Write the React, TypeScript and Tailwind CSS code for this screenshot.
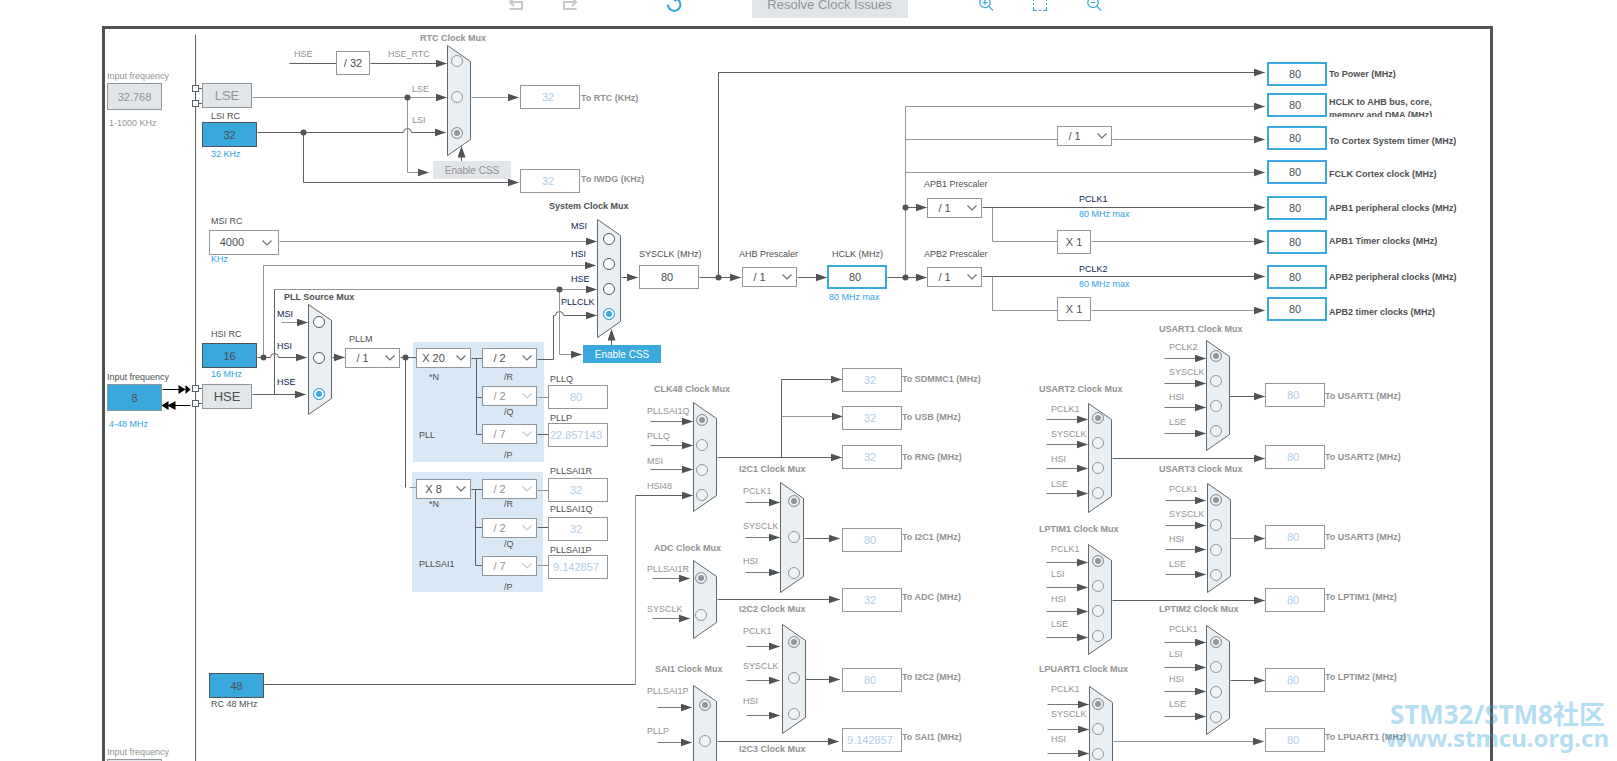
import { useState } from "react";
import clsx from "clsx";

type Tone = "dark" | "gray" | "navy" | "blue";

const tones: Record<Tone, string> = {
  dark: "text-[#4d5052]",
  gray: "text-[#929292]",
  navy: "text-[#0b1d4d]",
  blue: "text-[#2ea3dc]",
};

// --- WIRES ---
type Wire = { d: string; soft?: boolean; arrow?: boolean };

const wires: Wire[] = [
  { d: "M195 34V1000" },
  // RTC
  { d: "M289 63H336" },
  { d: "M370 63H446", arrow: true },
  { d: "M252 97H446", soft: true, arrow: true },
  { d: "M257 132H403a4 4 0 0 1 8 0H445", arrow: true },
  { d: "M407 97V172H428", soft: true, arrow: true },
  { d: "M303 132V182H518", arrow: true },
  { d: "M471 97H518", soft: true, arrow: true },
  { d: "M461 161V146", arrow: true },
  // System clock
  { d: "M279 241H596", soft: true, arrow: true },
  { d: "M263 357V265H595", soft: true, arrow: true },
  { d: "M274 394V289" },
  { d: "M274 289H596", soft: true, arrow: true },
  { d: "M537 359H553V315H555a4 4 0 0 1 8 0H596", arrow: true },
  { d: "M559 289V354H581", soft: true, arrow: true },
  { d: "M611 345V329", arrow: true },
  { d: "M621 277H637", arrow: true },
  { d: "M699 277H740", arrow: true },
  { d: "M718 277V72H1264", arrow: true },
  { d: "M797 277H826", arrow: true },
  { d: "M887 277H926", arrow: true },
  { d: "M905 277V106H1264", soft: true, arrow: true },
  { d: "M905 139H1057", soft: true },
  { d: "M1112 139H1264", soft: true, arrow: true },
  { d: "M905 172H1264", soft: true, arrow: true },
  { d: "M905 207H926", arrow: true },
  { d: "M982 207H1264", arrow: true },
  { d: "M992 207V241H1057", soft: true },
  { d: "M1091 241H1264", soft: true, arrow: true },
  { d: "M982 276H1264", arrow: true },
  { d: "M992 276V310H1057", soft: true },
  { d: "M1091 310H1264", soft: true, arrow: true },
  // PLL
  { d: "M281 322H307", soft: true, arrow: true },
  { d: "M257 357H270a4 4 0 0 1 8 0H306", arrow: true },
  { d: "M252 394H305", arrow: true },
  { d: "M332 357H344", arrow: true },
  { d: "M400 357H416" },
  { d: "M405 357V487" },
  { d: "M409 487H416", soft: true },
  { d: "M471 358H482" },
  { d: "M476 358V434H482" },
  { d: "M476 397H482" },
  { d: "M537 397H548", soft: true },
  { d: "M537 434H548" },
  { d: "M471 489H482" },
  { d: "M475 489V565H482" },
  { d: "M475 527H482" },
  { d: "M537 490H548", soft: true },
  { d: "M537 527H548" },
  { d: "M537 565H548", soft: true },
  { d: "M264 684H635" },
  { d: "M635 684V495", soft: true },
  { d: "M635 495H692", arrow: true },
  // Peripheral outputs
  { d: "M717 457H841", arrow: true },
  { d: "M781 457V379" },
  { d: "M781 379H841", arrow: true },
  { d: "M781 416H842", soft: true, arrow: true },
  { d: "M804 538H839", arrow: true },
  { d: "M717 599H839", arrow: true },
  { d: "M805 679H839", arrow: true },
  { d: "M717 741H838", arrow: true },
  { d: "M1229 396H1264", arrow: true },
  { d: "M1112 458H1264", arrow: true },
  { d: "M1230 538H1264", soft: true, arrow: true },
  { d: "M1112 600H1264", arrow: true },
  { d: "M1230 680H1264", arrow: true },
  { d: "M1113 741H1263", soft: true, arrow: true },
  // Pins
  { d: "M198 88H202M198 103H202M198 388H202M198 403H202" },
];

const dots = [
  [407, 97], [303, 132], [559, 289], [718, 277], [905, 207],
  [905, 277], [263, 357], [405, 357],
];

// --- MUXES ---
type MuxInput = { label: string; y: number; radioY: number; wireY?: number };
type MuxData = {
  name: string;
  titleX: number;
  titleY: number;
  x: number;
  y: number;
  height: number;
  radioX: number;
  labelX: number;
  wireX?: number;
  tipX?: number;
  active?: boolean;
  selected: number;
  inputs: MuxInput[];
};

const muxes: MuxData[] = [
  {
    name: "RTC Clock Mux", titleX: 420, titleY: 38, x: 447, y: 45, height: 110, radioX: 457, labelX: 412, selected: 2,
    inputs: [
      { label: "", y: 54, radioY: 61 },
      { label: "LSE", y: 89, radioY: 97 },
      { label: "LSI", y: 120, radioY: 133 },
    ],
  },
  {
    name: "System Clock Mux", titleX: 549, titleY: 206, x: 597, y: 219, height: 118, radioX: 609, labelX: 571, active: true, selected: 3,
    inputs: [
      { label: "MSI", y: 226, radioY: 239 },
      { label: "HSI", y: 254, radioY: 264 },
      { label: "HSE", y: 279, radioY: 289 },
      { label: "PLLCLK", y: 302, radioY: 314 },
    ],
  },
  {
    name: "PLL Source Mux", titleX: 284, titleY: 297, x: 308, y: 304, height: 110, radioX: 319, labelX: 277, active: true, selected: 2,
    inputs: [
      { label: "MSI", y: 314, radioY: 322 },
      { label: "HSI", y: 346, radioY: 358 },
      { label: "HSE", y: 382, radioY: 394 },
    ],
  },
  {
    name: "CLK48 Clock Mux", titleX: 654, titleY: 389, x: 693, y: 402, height: 109, radioX: 702, labelX: 647, wireX: 650, tipX: 692, selected: 0,
    inputs: [
      { label: "PLLSAI1Q", y: 411, radioY: 420, wireY: 421 },
      { label: "PLLQ", y: 436, radioY: 445, wireY: 445 },
      { label: "MSI", y: 461, radioY: 470, wireY: 469 },
      { label: "HSI48", y: 486, radioY: 495 },
    ],
  },
  {
    name: "I2C1 Clock Mux", titleX: 739, titleY: 469, x: 780, y: 482, height: 110, radioX: 794, labelX: 743, wireX: 745, tipX: 779, selected: 0,
    inputs: [
      { label: "PCLK1", y: 491, radioY: 501, wireY: 502 },
      { label: "SYSCLK", y: 526, radioY: 537, wireY: 537 },
      { label: "HSI", y: 561, radioY: 573, wireY: 572 },
    ],
  },
  {
    name: "ADC Clock Mux", titleX: 654, titleY: 548, x: 693, y: 560, height: 78, radioX: 701, labelX: 647, wireX: 652, tipX: 689, selected: 0,
    inputs: [
      { label: "PLLSAI1R", y: 569, radioY: 578, wireY: 578 },
      { label: "SYSCLK", y: 609, radioY: 615, wireY: 618 },
    ],
  },
  {
    name: "I2C2 Clock Mux", titleX: 739, titleY: 609, x: 782, y: 624, height: 109, radioX: 794, labelX: 743, wireX: 746, tipX: 779, selected: 0,
    inputs: [
      { label: "PCLK1", y: 631, radioY: 642, wireY: 646 },
      { label: "SYSCLK", y: 666, radioY: 678, wireY: 680 },
      { label: "HSI", y: 701, radioY: 714, wireY: 715 },
    ],
  },
  {
    name: "SAI1 Clock Mux", titleX: 655, titleY: 669, x: 693, y: 685, height: 110, radioX: 705, labelX: 647, wireX: 657, tipX: 691, selected: 0,
    inputs: [
      { label: "PLLSAI1P", y: 691, radioY: 705, wireY: 707 },
      { label: "PLLP", y: 731, radioY: 741, wireY: 742 },
    ],
  },
  {
    name: "USART1 Clock Mux", titleX: 1159, titleY: 329, x: 1206, y: 340, height: 110, radioX: 1216, labelX: 1169, wireX: 1164, tipX: 1205, selected: 0,
    inputs: [
      { label: "PCLK2", y: 347, radioY: 356, wireY: 358 },
      { label: "SYSCLK", y: 372, radioY: 381, wireY: 383 },
      { label: "HSI", y: 397, radioY: 406, wireY: 407 },
      { label: "LSE", y: 422, radioY: 431, wireY: 433 },
    ],
  },
  {
    name: "USART2 Clock Mux", titleX: 1039, titleY: 389, x: 1088, y: 403, height: 109, radioX: 1098, labelX: 1051, wireX: 1046, tipX: 1087, selected: 0,
    inputs: [
      { label: "PCLK1", y: 409, radioY: 418, wireY: 419 },
      { label: "SYSCLK", y: 434, radioY: 443, wireY: 444 },
      { label: "HSI", y: 459, radioY: 468, wireY: 468 },
      { label: "LSE", y: 484, radioY: 493, wireY: 493 },
    ],
  },
  {
    name: "USART3 Clock Mux", titleX: 1159, titleY: 469, x: 1207, y: 483, height: 109, radioX: 1216, labelX: 1169, wireX: 1165, tipX: 1205, selected: 0,
    inputs: [
      { label: "PCLK1", y: 489, radioY: 500, wireY: 500 },
      { label: "SYSCLK", y: 514, radioY: 525, wireY: 525 },
      { label: "HSI", y: 539, radioY: 550, wireY: 549 },
      { label: "LSE", y: 564, radioY: 575, wireY: 574 },
    ],
  },
  {
    name: "LPTIM1 Clock Mux", titleX: 1039, titleY: 529, x: 1088, y: 544, height: 110, radioX: 1098, labelX: 1051, wireX: 1046, tipX: 1087, selected: 0,
    inputs: [
      { label: "PCLK1", y: 549, radioY: 561, wireY: 562 },
      { label: "LSI", y: 574, radioY: 586, wireY: 587 },
      { label: "HSI", y: 599, radioY: 611, wireY: 611 },
      { label: "LSE", y: 624, radioY: 636, wireY: 637 },
    ],
  },
  {
    name: "LPTIM2 Clock Mux", titleX: 1159, titleY: 609, x: 1206, y: 625, height: 109, radioX: 1216, labelX: 1169, wireX: 1164, tipX: 1205, selected: 0,
    inputs: [
      { label: "PCLK1", y: 629, radioY: 642, wireY: 642 },
      { label: "LSI", y: 654, radioY: 667, wireY: 667 },
      { label: "HSI", y: 679, radioY: 692, wireY: 691 },
      { label: "LSE", y: 704, radioY: 717, wireY: 716 },
    ],
  },
  {
    name: "LPUART1 Clock Mux", titleX: 1039, titleY: 669, x: 1089, y: 686, height: 110, radioX: 1098, labelX: 1051, wireX: 1047, tipX: 1088, selected: 0,
    inputs: [
      { label: "PCLK1", y: 689, radioY: 704, wireY: 704 },
      { label: "SYSCLK", y: 714, radioY: 729, wireY: 729 },
      { label: "HSI", y: 739, radioY: 754, wireY: 753 },
      { label: "LSE", y: 764, radioY: 779, wireY: 778 },
    ],
  },
];

// --- VALUE BOXES ---
const fieldKinds = {
  input: "w-[55px] h-[27px] border border-[#8f979d]",
  source: "w-[55px] h-[25px] border border-[#4f5456] bg-[#39a8dc] text-[#4d5052]",
  factor: "w-[34px] h-6 border border-[#8f979d] bg-white text-[#4d5052]",
  plain: "w-[60px] h-6 border border-[#8f979d] bg-white pr-1 text-[#4d5052]",
  off: "w-[60px] h-6 border border-[#8f979d] bg-white pr-1 text-[#b3cde6]",
  on: "w-[60px] h-6 border-2 border-[#39a8dc] bg-white pr-1 text-[#4d5052]",
};

type FieldData = {
  id: string;
  kind: keyof typeof fieldKinds;
  x: number;
  y: number;
  value: string;
  className?: string;
  label?: string;
  labelX?: number;
  labelY?: number;
  tone?: Tone;
  bold?: boolean;
};

const fields: FieldData[] = [
  { id: "lse-in", kind: "input", x: 107, y: 83, value: "32.768", className: "bg-[#e2e6e9] text-[#8f959a]", label: "Input frequency", labelX: 107, labelY: 76, tone: "gray" },
  { id: "hse-in", kind: "input", x: 107, y: 384, value: "8", className: "bg-[#39a8dc] text-[#4d5052]", label: "Input frequency", labelX: 107, labelY: 377, tone: "dark" },
  { id: "sai-in", kind: "input", x: 107, y: 759, value: "2.097152", className: "bg-[#e2e6e9] text-[#8f959a]", label: "Input frequency", labelX: 107, labelY: 752, tone: "gray" },
  { id: "lsi", kind: "source", x: 202, y: 122, value: "32", label: "LSI RC", labelX: 211, labelY: 116, tone: "dark" },
  { id: "hsi", kind: "source", x: 202, y: 343, value: "16", label: "HSI RC", labelX: 211, labelY: 334, tone: "dark" },
  { id: "hsi48", kind: "source", x: 209, y: 673, value: "48", label: "RC 48 MHz", labelX: 211, labelY: 704, tone: "dark" },
  { id: "rtc-div", kind: "factor", x: 336, y: 51, value: "/ 32" },
  { id: "apb1-mul", kind: "factor", x: 1057, y: 230, value: "X 1" },
  { id: "apb2-mul", kind: "factor", x: 1057, y: 297, value: "X 1" },
  { id: "sysclk", kind: "plain", x: 639, y: 265, value: "80", label: "SYSCLK (MHz)", labelX: 639, labelY: 254, tone: "dark" },
  { id: "hclk", kind: "on", x: 827, y: 265, value: "80", label: "HCLK (MHz)", labelX: 832, labelY: 254, tone: "dark" },
  { id: "pllq", kind: "off", x: 548, y: 385, value: "80", label: "PLLQ", labelX: 550, labelY: 379, tone: "dark" },
  { id: "pllp", kind: "off", x: 548, y: 423, value: "22.857143", label: "PLLP", labelX: 550, labelY: 418, tone: "dark" },
  { id: "pllsai1r", kind: "off", x: 548, y: 478, value: "32", label: "PLLSAI1R", labelX: 550, labelY: 471, tone: "dark" },
  { id: "pllsai1q", kind: "off", x: 548, y: 517, value: "32", label: "PLLSAI1Q", labelX: 550, labelY: 509, tone: "dark" },
  { id: "pllsai1p", kind: "off", x: 548, y: 555, value: "9.142857", label: "PLLSAI1P", labelX: 550, labelY: 550, tone: "dark" },
];

const output = (id: string, x: number, y: number, value: string, label: string, labelX: number, labelY: number): FieldData => ({
  id, kind: "off", x, y, value, label, labelX, labelY, tone: "gray", bold: true,
});

const outputs: FieldData[] = [
  output("rtc", 520, 85, "32", "To RTC (KHz)", 581, 98),
  output("iwdg", 520, 169, "32", "To IWDG (KHz)", 581, 179),
  output("sdmmc1", 842, 368, "32", "To SDMMC1 (MHz)", 902, 379),
  output("usb", 842, 406, "32", "To USB (MHz)", 902, 417),
  output("rng", 842, 445, "32", "To RNG (MHz)", 902, 457),
  output("i2c1", 842, 528, "80", "To I2C1 (MHz)", 902, 537),
  output("adc", 842, 588, "32", "To ADC (MHz)", 902, 597),
  output("i2c2", 842, 668, "80", "To I2C2 (MHz)", 902, 677),
  output("sai1", 842, 728, "9.142857", "To SAI1 (MHz)", 902, 737),
  output("usart1", 1265, 383, "80", "To USART1 (MHz)", 1325, 396),
  output("usart2", 1265, 445, "80", "To USART2 (MHz)", 1325, 457),
  output("usart3", 1265, 525, "80", "To USART3 (MHz)", 1325, 537),
  output("lptim1", 1265, 588, "80", "To LPTIM1 (MHz)", 1325, 597),
  output("lptim2", 1265, 668, "80", "To LPTIM2 (MHz)", 1325, 677),
  output("lpuart1", 1265, 728, "80", "To LPUART1 (MHz)", 1325, 737),
];

const busClocks = [
  { id: "power", y: 62, label: "To Power (MHz)", labelY: 74 },
  { id: "ahb", y: 93, label: "HCLK to AHB bus, core,\nmemory and DMA (MHz)", labelY: 102 },
  { id: "cortex", y: 126, label: "To Cortex System timer (MHz)", labelY: 141 },
  { id: "fclk", y: 160, label: "FCLK Cortex clock (MHz)", labelY: 174 },
  { id: "apb1-periph", y: 196, label: "APB1 peripheral clocks (MHz)", labelY: 208 },
  { id: "apb1-timer", y: 230, label: "APB1 Timer clocks (MHz)", labelY: 241 },
  { id: "apb2-periph", y: 265, label: "APB2 peripheral clocks (MHz)", labelY: 277 },
  { id: "apb2-timer", y: 297, label: "APB2 timer clocks (MHz)", labelY: 312 },
];

// --- DROP-DOWNS ---
type PickerData = { id: string; name: string; x: number; y: number; value: string; options: string[]; disabled?: boolean; wide?: boolean };

const divs = ["/ 1", "/ 2", "/ 4", "/ 7", "/ 8", "/ 16"];

const pickers: PickerData[] = [
  { id: "msi-range", name: "MSI RC", x: 209, y: 230, value: "4000", options: ["100", "1000", "4000", "48000"], wide: true },
  { id: "pllm", name: "PLLM", x: 345, y: 348, value: "/ 1", options: divs },
  { id: "ahb-pre", name: "AHB Prescaler", x: 742, y: 267, value: "/ 1", options: divs },
  { id: "cortex-pre", name: "Cortex timer prescaler", x: 1057, y: 126, value: "/ 1", options: divs },
  { id: "apb1-pre", name: "APB1 Prescaler", x: 927, y: 198, value: "/ 1", options: divs },
  { id: "apb2-pre", name: "APB2 Prescaler", x: 927, y: 267, value: "/ 1", options: divs },
  { id: "pll-n", name: "PLL N", x: 416, y: 348, value: "X 20", options: ["X 8", "X 20", "X 40"] },
  { id: "pll-r", name: "PLL R", x: 482, y: 348, value: "/ 2", options: divs },
  { id: "pll-q", name: "PLL Q", x: 482, y: 386, value: "/ 2", options: divs, disabled: true },
  { id: "pll-p", name: "PLL P", x: 482, y: 424, value: "/ 7", options: divs, disabled: true },
  { id: "sai-n", name: "PLLSAI1 N", x: 416, y: 479, value: "X 8", options: ["X 8", "X 20", "X 40"] },
  { id: "sai-r", name: "PLLSAI1 R", x: 482, y: 479, value: "/ 2", options: divs, disabled: true },
  { id: "sai-q", name: "PLLSAI1 Q", x: 482, y: 518, value: "/ 2", options: divs, disabled: true },
  { id: "sai-p", name: "PLLSAI1 P", x: 482, y: 556, value: "/ 7", options: divs, disabled: true },
];

// --- FREE TEXT ---
type NoteData = { text: string; x: number; y: number; tone: Tone; bold?: boolean; htmlFor?: string };

const notes: NoteData[] = [
  { text: "1-1000 KHz", x: 109, y: 123, tone: "gray" },
  { text: "4-48 MHz", x: 109, y: 424, tone: "blue" },
  { text: "32 KHz", x: 211, y: 154, tone: "blue" },
  { text: "16 MHz", x: 211, y: 374, tone: "blue" },
  { text: "KHz", x: 211, y: 259, tone: "blue" },
  { text: "MSI RC", x: 211, y: 221, tone: "dark", htmlFor: "msi-range" },
  { text: "HSE", x: 294, y: 54, tone: "gray" },
  { text: "HSE_RTC", x: 388, y: 54, tone: "gray" },
  { text: "PLLM", x: 349, y: 339, tone: "dark", htmlFor: "pllm" },
  { text: "AHB Prescaler", x: 739, y: 254, tone: "dark", htmlFor: "ahb-pre" },
  { text: "APB1 Prescaler", x: 924, y: 184, tone: "dark", htmlFor: "apb1-pre" },
  { text: "APB2 Prescaler", x: 924, y: 254, tone: "dark", htmlFor: "apb2-pre" },
  { text: "80 MHz max", x: 829, y: 297, tone: "blue" },
  { text: "PCLK1", x: 1079, y: 199, tone: "navy" },
  { text: "80 MHz max", x: 1079, y: 214, tone: "blue" },
  { text: "PCLK2", x: 1079, y: 269, tone: "navy" },
  { text: "80 MHz max", x: 1079, y: 284, tone: "blue" },
  { text: "*N", x: 429, y: 377, tone: "dark", htmlFor: "pll-n" },
  { text: "/R", x: 504, y: 377, tone: "dark", htmlFor: "pll-r" },
  { text: "/Q", x: 504, y: 412, tone: "dark", htmlFor: "pll-q" },
  { text: "/P", x: 504, y: 455, tone: "dark", htmlFor: "pll-p" },
  { text: "PLL", x: 419, y: 435, tone: "dark" },
  { text: "*N", x: 429, y: 504, tone: "dark", htmlFor: "sai-n" },
  { text: "/R", x: 504, y: 504, tone: "dark", htmlFor: "sai-r" },
  { text: "/Q", x: 504, y: 544, tone: "dark", htmlFor: "sai-q" },
  { text: "/P", x: 504, y: 587, tone: "dark", htmlFor: "sai-p" },
  { text: "PLLSAI1", x: 419, y: 564, tone: "dark" },
  { text: "I2C3 Clock Mux", x: 739, y: 749, tone: "gray", bold: true },
];

function Note({ text, x, y, tone, bold, htmlFor }: NoteData) {
  const className = clsx("absolute whitespace-pre text-[9px] leading-3", tones[tone], bold && "font-bold");
  const style = { left: x, top: y - 6 };
  return htmlFor ? (
    <label htmlFor={htmlFor} className={className} style={style}>{text}</label>
  ) : (
    <span className={className} style={style}>{text}</span>
  );
}

function Field({ field }: { field: FieldData }) {
  return (
    <>
      {field.label && (
        <Note text={field.label} x={field.labelX ?? field.x} y={field.labelY ?? field.y} tone={field.tone ?? "dark"} bold={field.bold} htmlFor={field.id} />
      )}
      <input
        id={field.id}
        readOnly
        defaultValue={field.value}
        aria-label={field.label ? undefined : field.id}
        className={clsx("absolute p-0 text-center text-[11px] outline-none", fieldKinds[field.kind], field.className)}
        style={{ left: field.x, top: field.y }}
      />
    </>
  );
}

function Picker({ picker }: { picker: PickerData }) {
  return (
    <div className={clsx("absolute", picker.wide ? "h-[25px] w-[70px]" : "h-5 w-[55px]")} style={{ left: picker.x, top: picker.y }}>
      <select
        id={picker.id}
        aria-label={picker.name}
        defaultValue={picker.value}
        disabled={picker.disabled}
        className={clsx(
          "block size-full appearance-none border border-[#8f979d] bg-white text-[11px] [text-align-last:center] disabled:opacity-100",
          picker.wide ? "pr-6" : "pr-5",
          picker.disabled ? "text-[#929292]" : "text-[#4d5052]"
        )}
      >
        {picker.options.map((option) => (
          <option key={option}>{option}</option>
        ))}
      </select>
      <svg
        viewBox="0 0 10 6"
        className={clsx(
          "pointer-events-none absolute inset-y-0 my-auto h-[6px] w-[10px]",
          picker.wide ? "right-[7px]" : "right-[5px]",
          picker.disabled ? "text-[#c4c8cb]" : "text-[#6b7073]"
        )}
      >
        <path d="M0.5 0.5 5 5 9.5 0.5" fill="none" stroke="currentColor" strokeWidth="1.2" />
      </svg>
    </div>
  );
}

function Mux({ mux }: { mux: MuxData }) {
  const [selected, setSelected] = useState(mux.selected);
  return (
    <>
      <Note text={mux.name} x={mux.titleX} y={mux.titleY} tone={mux.active ? "dark" : "gray"} bold />
      {mux.inputs.map((input, i) => {
        const id = `${mux.name}-${i}`.replace(/ /g, "-");
        return (
          <div key={id}>
            {input.label && (
              <Note
                text={input.label}
                x={input.label === "PLLCLK" ? mux.labelX - 10 : mux.labelX}
                y={input.y}
                tone={mux.active ? "navy" : "gray"}
                htmlFor={id}
              />
            )}
            <input
              type="radio"
              id={id}
              name={mux.name}
              aria-label={input.label ? undefined : "HSE_RTC"}
              checked={selected === i}
              onChange={() => setSelected(i)}
              className={clsx(
                "absolute size-3 appearance-none rounded-full border",
                mux.active
                  ? "border-[#4f5456] bg-white checked:border-[#39a8dc] checked:bg-[#39a8dc] checked:shadow-[inset_0_0_0_2px_#ffffff]"
                  : "border-[#8f979d] bg-[#f0f2f4] checked:bg-[#8f979d] checked:shadow-[inset_0_0_0_2px_#f0f2f4]"
              )}
              style={{ left: mux.radioX - 6, top: input.radioY - 6 }}
            />
          </div>
        );
      })}
    </>
  );
}

function Schematic() {
  return (
    <svg className="pointer-events-none absolute left-0 top-0 h-[1000px] w-[1617px]" viewBox="0 0 1617 1000" aria-hidden="true">
      <defs>
        <marker id="arrow" markerUnits="userSpaceOnUse" markerWidth="12" markerHeight="8" refX="11" refY="4" orient="auto">
          <path d="M0 0 11.5 4 0 8Z" fill="#4f5355" />
        </marker>
      </defs>
      <g transform="translate(0.5 0.5)" fill="none">
        {muxes.map((m) => (
          <path
            key={m.name}
            d={`M${m.x} ${m.y}L${m.x + 23} ${m.y + 16}V${m.y + m.height - 16}L${m.x} ${m.y + m.height}Z`}
            fill="#eaeff3"
            stroke="#63686b"
          />
        ))}
        {wires.map((w) => (
          <path key={w.d} d={w.d} stroke={w.soft ? "#939698" : "#5c6062"} markerEnd={w.arrow ? "url(#arrow)" : undefined} />
        ))}
        {muxes.map((m) =>
          m.inputs.map((input) =>
            input.wireY ? (
              <path key={m.name + input.wireY} d={`M${m.wireX} ${input.wireY}H${m.tipX}`} stroke="#74787a" markerEnd="url(#arrow)" />
            ) : null
          )
        )}
        {dots.map(([cx, cy]) => (
          <circle key={`${cx}-${cy}`} cx={cx} cy={cy} r="3" fill="#4f5355" />
        ))}
        {[86, 101, 386, 401].map((y) => (
          <rect key={y} x="192" y={y - 1} width="6" height="6" fill="#fff" stroke="#5c6062" />
        ))}
        {/* Crystal in and out */}
        <path d="M162 389H179M168 405H190" stroke="#000" />
        <path d="M178 384.500 185 389 178 393.500ZM185 384.500 190 389 185 393.500ZM161 405 168 400.500V409.500ZM167 405 175 400.500V409.500Z" fill="#000" />
      </g>
    </svg>
  );
}

function Toolbar() {
  const iconButton = "flex h-[26px] w-4 items-center justify-center";
  return (
    <header className="relative z-10 -mt-2 flex h-[26px] shrink-0 justify-center gap-[70px] pr-2">
      <div className="flex gap-[38px] text-[#c6c8ca]">
        <button aria-label="Undo" className={iconButton}>
          <svg viewBox="0 0 16 16" className="size-4" fill="none" stroke="currentColor" strokeWidth="2">
            <path d="M2 5H14V12H1.500M6 1 2 5 6 9" />
          </svg>
        </button>
        <button aria-label="Redo" className={iconButton}>
          <svg viewBox="0 0 16 16" className="size-4" fill="none" stroke="currentColor" strokeWidth="2">
            <path d="M14 5H2V12H14.500M10 1 14 5 10 9" />
          </svg>
        </button>
      </div>
      <button aria-label="Refresh" className="ml-[18px] flex h-[26px] w-4 items-center justify-center text-[#39a8dc]">
        <svg viewBox="0 0 16 16" className="size-4" fill="none" stroke="currentColor" strokeWidth="2">
          <path d="M2 7.500A6.200 6.200 0 1 0 11.500 2.400L8 2.200M10 0 8 2.200 10 4.400" />
        </svg>
      </button>
      <button className="w-[156px] bg-[#e1e5e8] text-[13px] text-[#8f959a]">Resolve Clock Issues</button>
      <div className="flex gap-[38px] text-[#39a8dc]">
        <button aria-label="Zoom in" className={iconButton}>
          <svg viewBox="0 0 16 16" className="size-4" fill="none" stroke="currentColor" strokeWidth="1.200">
            <circle cx="7" cy="5.500" r="5.200" />
            <path d="M10.700 9.200 15 13.500M4.500 5.500H9.500M7 3V8" />
          </svg>
        </button>
        <button aria-label="Fit to window" className={iconButton}>
          <svg viewBox="0 0 16 16" className="size-4" fill="none" stroke="currentColor" strokeWidth="1.200">
            <path d="M1.500 4V0.700H5M11 0.700H14.500V4M14.500 10V13.500H11M5 13.500H1.500V10M1.500 6V8M14.500 6V8M7 13.500H9M7 0.700H9" />
          </svg>
        </button>
        <button aria-label="Zoom out" className={iconButton}>
          <svg viewBox="0 0 16 16" className="size-4" fill="none" stroke="currentColor" strokeWidth="1.200">
            <circle cx="7" cy="5.500" r="5.200" />
            <path d="M10.700 9.200 15 13.500M4.500 5.500H9.500" />
          </svg>
        </button>
      </div>
    </header>
  );
}

export default function App() {
  return (
    <main className="relative flex h-screen flex-col overflow-hidden bg-white font-['Liberation_Sans',Arial,sans-serif]">
      <Toolbar />
      <div className="mt-2 mr-[124px] ml-[102px] flex-1 border-[3px] border-b-0 border-[#4f5355]" />

      {/* Clock tree canvas */}
      <section aria-label="Clock configuration" className="absolute inset-0">
        <div className="absolute left-[413px] top-[342px] h-[120px] w-[131px] bg-[#d9e8f5]" />
        <div className="absolute left-[412px] top-[472px] h-[120px] w-[131px] bg-[#d9e8f5]" />
        <Schematic />
        {notes.map((note) => (
          <Note key={`${note.text}-${note.x}-${note.y}`} {...note} />
        ))}
        {muxes.map((mux) => (
          <Mux key={mux.name} mux={mux} />
        ))}
        {[...fields, ...outputs].map((field) => (
          <Field key={field.id} field={field} />
        ))}
        {busClocks.map((clock) => (
          <div key={clock.id}>
            <Field field={{ id: clock.id, kind: "on", x: 1267, y: clock.y, value: "80" }} />
            <label
              htmlFor={clock.id}
              className="absolute max-h-[21px] overflow-hidden whitespace-pre text-[9px] leading-[13px] font-bold text-[#4d5052]"
              style={{ left: 1329, top: clock.labelY - 6 }}
            >
              {clock.label}
            </label>
          </div>
        ))}
        {pickers.map((picker) => (
          <Picker key={picker.id} picker={picker} />
        ))}
        <button className="absolute left-[202px] top-[83px] h-[25px] w-[50px] border border-[#8f979d] bg-[#e2e6e9] text-[13px] text-[#8f959a]">LSE</button>
        <button className="absolute left-[202px] top-[384px] h-[25px] w-[50px] border border-[#8f979d] bg-[#e2e6e9] text-[13px] text-[#4d5052]">HSE</button>
        <button disabled className="absolute left-[433px] top-[161px] h-[18px] w-[78px] bg-[#e2e6e9] text-[10px] text-[#929292]">Enable CSS</button>
        <button className="absolute left-[583px] top-[345px] h-[18px] w-[78px] bg-[#39a8dc] text-[10px] text-white">Enable CSS</button>
      </section>

      <p className="pointer-events-none absolute right-2 bottom-[11px] text-right font-['Noto_Sans','Noto_Sans_CJK_SC',sans-serif] leading-6 font-bold text-[#39a8dc]/40">
        <span className="block pr-1 text-[26px] leading-6">STM32/STM8社区</span>
        <span className="block text-[24px] leading-6">www.stmcu.org.cn</span>
      </p>
    </main>
  );
}
